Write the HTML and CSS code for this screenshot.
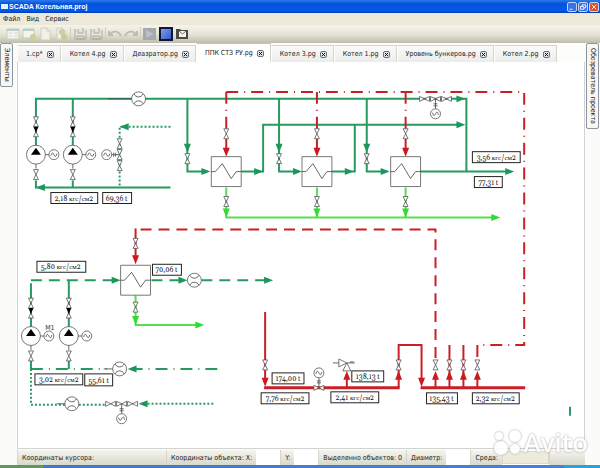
FILE: index.html
```
<!DOCTYPE html>
<html lang="ru">
<head>
    <meta charset="UTF-8">
    <meta name="viewport" content="width=device-width, initial-scale=1.0">
    <title>SCADA Котельная.proj</title>
    <link rel="stylesheet" href="styles.css">
</head>
<body>

<header class="titlebar">
    <span class="app-icon"></span>
    <h1>SCADA Котельная.proj</h1>
    <button class="win-btn" aria-label="Свернуть"><svg viewBox="0 0 9 9"><path d="M2 7h3"/></svg></button>
    <button class="win-btn" aria-label="Восстановить"><svg viewBox="0 0 9 9"><path d="M3.5 4V2h4v3.500H6M1.500 4h4v3h-4z"/></svg></button>
    <button class="win-btn close" aria-label="Закрыть"><svg viewBox="0 0 9 9"><path d="M2 2l5 5M7 2l-5 5"/></svg></button>
</header>

<nav class="menu">
    <button>Файл</button>
    <button>Вид</button>
    <button>Сервис</button>
</nav>

<div class="toolbar">
    <button aria-label="Новый проект"><svg viewBox="0 0 14 14"><path d="M1 2h12v10H1z" fill="#f4f5ee" stroke="#c9cdbf"/><path d="M1 3h12" stroke="#b5cfc9" stroke-width="2"/><path d="M3 6h3M3 9h3M8 6h4M8 9h4" stroke="#d5d8cc"/></svg></button>
    <button aria-label="Добавить окно"><svg viewBox="0 0 14 14"><path d="M1 2h11v9H1z" fill="#f4f5ee" stroke="#c9cdbf"/><path d="M1 3h11" stroke="#b5cfc9" stroke-width="2"/><circle cx="11" cy="10" r="3" fill="#c5d39b"/></svg></button>
    <button aria-label="Новая страница"><svg viewBox="0 0 14 14"><path d="M3 1h6l3 3v9H3z" fill="#f1f1e9" stroke="#cfd0c4"/><path d="M9 1v3h3" fill="none" stroke="#cfd0c4"/></svg></button>
    <button aria-label="Добавить страницу"><svg viewBox="0 0 14 14"><path d="M3 1h5l3 3v8H3z" fill="#efefe5" stroke="#cfd0c4"/><circle cx="8" cy="5" r="3" fill="#c7d1a8"/><circle cx="10" cy="10" r="3" fill="#c2ce9a"/></svg></button>
    <span class="separator"></span>
    <button aria-label="Сохранить"><svg viewBox="0 0 14 14"><path d="M2 2v10h11V3M4 9h7v3H4zM5 2v4h5V1" fill="#e4e4dc" stroke="#a9aaa2"/></svg></button>
    <button aria-label="Сохранить все"><svg viewBox="0 0 14 14"><path d="M2 2v10h11V3M4 9h7v3H4zM5 2v4h5V1" fill="#e4e4dc" stroke="#a9aaa2"/></svg></button>
    <span class="separator"></span>
    <button aria-label="Отменить"><svg viewBox="0 0 14 14"><path d="M1 4v4h4M2 7c3-3 8-4 11 2" fill="none" stroke="#bcbdb3" stroke-width="2"/></svg></button>
    <button aria-label="Повторить"><svg viewBox="0 0 14 14"><path d="M13 4v4H9M12 7C9 4 4 3 1 9" fill="none" stroke="#bcbdb3" stroke-width="2"/></svg></button>
    <span class="separator"></span>
    <button aria-label="Запуск"><svg viewBox="0 0 14 14"><path d="M0 1h13v12H0z" fill="#a5a8ae"/><path d="M3 3l8 4-8 4z" fill="#bcc0c8"/></svg></button>
    <button aria-label="Стоп"><svg viewBox="0 0 14 14"><defs><linearGradient id="stop" x2="1" y2="1"><stop stop-color="#86a6ee"/><stop offset="1" stop-color="#2b54c0"/></linearGradient></defs><path d="M1 1h12v12H1z" fill="url(#stop)" stroke="#0e1538" stroke-width="2"/></svg></button>
    <button aria-label="Снимок"><svg viewBox="0 0 14 14"><path d="M1 2h4l1 1h7v9H1z" fill="#4a4c44"/><path d="M4 4h7v6H4z" fill="#f5f5ef"/><path d="M4 4l3.500 3L11 4" fill="none" stroke="#6b6d65"/></svg></button>
</div>

<div class="workspace">
    <aside class="side left"><button>Элементы</button></aside>

    <main class="editor">
        <div class="tabs" role="tablist">
            <div class="tab"><button role="tab">1.ср*</button><button class="tab-close" aria-label="Закрыть вкладку"><svg viewBox="0 0 5 5"><path d="M1 1l3 3M4 1L1 4"/></svg></button></div>
            <div class="tab"><button role="tab">Котел 4.pg</button><button class="tab-close" aria-label="Закрыть вкладку"><svg viewBox="0 0 5 5"><path d="M1 1l3 3M4 1L1 4"/></svg></button></div>
            <div class="tab"><button role="tab">Деазратор.pg</button><button class="tab-close" aria-label="Закрыть вкладку"><svg viewBox="0 0 5 5"><path d="M1 1l3 3M4 1L1 4"/></svg></button></div>
            <div class="tab active"><button role="tab" aria-selected="true">ППК СТЗ РУ.pg</button><button class="tab-close" aria-label="Закрыть вкладку"><svg viewBox="0 0 5 5"><path d="M1 1l3 3M4 1L1 4"/></svg></button></div>
            <div class="tab"><button role="tab">Котел 3.pg</button><button class="tab-close" aria-label="Закрыть вкладку"><svg viewBox="0 0 5 5"><path d="M1 1l3 3M4 1L1 4"/></svg></button></div>
            <div class="tab"><button role="tab">Котел 1.pg</button><button class="tab-close" aria-label="Закрыть вкладку"><svg viewBox="0 0 5 5"><path d="M1 1l3 3M4 1L1 4"/></svg></button></div>
            <div class="tab"><button role="tab">Уровень бункеров.pg</button><button class="tab-close" aria-label="Закрыть вкладку"><svg viewBox="0 0 5 5"><path d="M1 1l3 3M4 1L1 4"/></svg></button></div>
            <div class="tab"><button role="tab">Котел 2.pg</button><button class="tab-close" aria-label="Закрыть вкладку"><svg viewBox="0 0 5 5"><path d="M1 1l3 3M4 1L1 4"/></svg></button></div>
        </div>

        <svg class="scheme" viewBox="17 62 568 387" preserveAspectRatio="xMinYMin meet">
            <defs>
                <path id="arrow" d="M0 0L-9-3.500V3.500z"/>
                <path id="valve" class="part" d="M-2.500-5h5L-2.500 5h5z"/>
                <g id="check">
                    <path class="part" d="M-2.500 5h5L0 0z"/>
                    <path class="solid" d="M-2.500-5h5L0 1z"/>
                </g>
                <g id="motor">
                    <circle class="part" r="5"/>
                    <path class="wire" d="M-3 1C-2-3-1-2 0 0S2 3 3-1"/>
                </g>
                <g id="meter">
                    <circle class="part" r="7"/>
                    <path class="wire" d="M-4.500-5C-3-1 3-1 4.500-5M-4.500 5C-3 1 3 1 4.500 5"/>
                </g>
                <g id="pump">
                    <path class="wire" d="M9 0h5M0 9v5"/>
                    <circle class="part" r="9.500"/>
                    <path class="solid" d="M-5 0h10L0-7z"/>
                    <use href="#motor" x="18"/>
                    <use href="#valve" y="20"/>
                    <use href="#valve" y="-33"/>
                    <use href="#check" y="-23"/>
                </g>
                <g id="boiler">
                    <path class="part" d="M-15-15h30v30h-30z"/>
                    <path class="wire" d="M-15 0h4l7-8 9 15 5-7h5"/>
                </g>
                <g id="control">
                    <path class="wire" d="M0 0v-10M-2-5h4M-2-7h4"/>
                    <use href="#motor" y="-15"/>
                    <use href="#valve" transform="rotate(90)"/>
                </g>
            </defs>

            <!-- feed water, upper part -->
            <g class="pipe green">
                <path d="M35 146V99h432v73M72 99v47M35 181v7h135M72 181v7"/>
                <path d="M187 99v73h20M279 99v73h20M367 99v73h20"/>
                <path d="M241 172h22v-47h200M332 172h23v-47M420 172h87"/>
                <path class="dotted" d="M170 127h-51v61"/>
            </g>
            <path class="wire" d="M107 99h24"/>
            <g class="green-fill">
                <use href="#arrow" transform="translate(35 188) rotate(180)"/>
                <use href="#arrow" transform="translate(119 127) rotate(180)"/>
                <use href="#arrow" transform="translate(187 153) rotate(90)"/>
                <use href="#arrow" transform="translate(279 153) rotate(90)"/>
                <use href="#arrow" transform="translate(367 153) rotate(90)"/>
                <use href="#arrow" x="210" y="172"/>
                <use href="#arrow" x="263" y="172"/>
                <use href="#arrow" x="302" y="172"/>
                <use href="#arrow" x="354" y="172"/>
                <use href="#arrow" x="390" y="172"/>
                <use href="#arrow" x="466" y="99"/>
                <use href="#arrow" x="466" y="125"/>
                <use href="#arrow" x="515" y="172"/>
            </g>

            <!-- drains -->
            <g class="pipe lime">
                <path d="M226 188v30h270M317 188v29M406 188v29"/>
                <path d="M135 296v30h62"/>
            </g>
            <g class="lime-fill">
                <use href="#arrow" transform="translate(226 218) rotate(90)"/>
                <use href="#arrow" transform="translate(317 218) rotate(90)"/>
                <use href="#arrow" transform="translate(406 218) rotate(90)"/>
                <use href="#arrow" x="501" y="218"/>
                <use href="#arrow" transform="translate(135 326) rotate(90)"/>
                <use href="#arrow" x="204" y="326"/>
            </g>

            <!-- steam to boilers -->
            <g class="pipe red">
                <path class="dashdot" d="M226 92h299v254h-47v20"/>
                <path class="dashdot" d="M226 92v38"/>
                <path class="dashdot" d="M317 92v38"/>
                <path class="dashdot" d="M406 92v38"/>
                <path d="M226 139v12M317 139v12M406 139v12"/>
                <path class="dashed" d="M140 230h296v132"/>
                <path d="M135 229v30"/>
            </g>
            <g class="red-fill">
                <use href="#arrow" transform="translate(226 157) rotate(90)"/>
                <use href="#arrow" transform="translate(317 157) rotate(90)"/>
                <use href="#arrow" transform="translate(406 157) rotate(90)"/>
                <use href="#arrow" transform="translate(135 265) rotate(90)"/>
            </g>

            <use href="#pump" x="35" y="155"/>
            <use href="#pump" x="72" y="155"/>
            <use href="#meter" x="138" y="99"/>
            <path class="wire" d="M111 155h8M113 153v4M115 153v4"/>
            <use href="#motor" x="106" y="155"/>
            <use href="#valve" x="119" y="144"/>
            <use href="#valve" x="119" y="155"/>
            <use href="#valve" x="119" y="166"/>
            <use href="#valve" x="187" y="159"/>
            <use href="#valve" x="279" y="159"/>
            <use href="#valve" x="367" y="159"/>
            <use href="#valve" x="226" y="134"/>
            <use href="#valve" x="317" y="134"/>
            <use href="#valve" x="406" y="134"/>
            <use href="#valve" x="226" y="202"/>
            <use href="#valve" x="317" y="202"/>
            <use href="#valve" x="406" y="202"/>
            <use href="#boiler" x="226" y="172"/>
            <use href="#boiler" x="317" y="172"/>
            <use href="#boiler" x="406" y="172"/>
            <use href="#control" transform="translate(436 99) scale(1 -1)"/>
            <use href="#valve" transform="translate(425 99) rotate(90)"/>
            <use href="#valve" transform="translate(447 99) rotate(90)"/>

            <!-- lower pumps and heater -->
            <g class="pipe green">
                <path d="M30 284v44M68 281v47M30 362v8M68 362v8"/>
                <path class="dashed" d="M30 281h84"/>
                <path class="dashed" d="M151 281h30M201 281h65"/>
                <path class="dashdot" d="M217 370h-90"/>
                <path class="dashdot" d="M30 370h76"/>
                <path class="dotted" d="M30 370v36h75M213 405h-67"/>
                <path d="M571 408v9"/>
            </g>
            <path class="wire" d="M103 370h10M56 405h9"/>
            <g class="green-fill">
                <use href="#arrow" x="120" y="281"/>
                <use href="#arrow" x="187" y="281"/>
                <use href="#arrow" x="273" y="281"/>
                <use href="#arrow" transform="translate(127 370) rotate(180)"/>
                <use href="#arrow" transform="translate(138 405) rotate(180)"/>
            </g>
            <use href="#pump" x="30" y="337"/>
            <use href="#pump" x="68" y="337"/>
            <use href="#boiler" x="135" y="281"/>
            <use href="#valve" x="135" y="244"/>
            <use href="#valve" x="135" y="308"/>
            <use href="#meter" x="194" y="281"/>
            <use href="#meter" x="119" y="370"/>
            <use href="#meter" x="71" y="405"/>
            <use href="#control" transform="translate(121 405) scale(1 -1)"/>
            <use href="#valve" transform="translate(110 405) rotate(90)"/>
            <use href="#valve" transform="translate(132 405) rotate(90)"/>

            <!-- steam header -->
            <g class="pipe red">
                <path d="M265 313v69M347 389v-9M399 389v-43h23v38M436 389v-9M450 389v-43M464 389v-43M478 389v-9"/>
                <path class="header" d="M264 389h136M421 389h105"/>
            </g>
            <g class="red-fill">
                <use href="#arrow" transform="translate(265 388) rotate(90)"/>
                <use href="#arrow" transform="translate(422 388) rotate(90)"/>
                <use href="#arrow" transform="translate(347 372) rotate(-90)"/>
                <use href="#arrow" transform="translate(399 372) rotate(-90)"/>
                <use href="#arrow" transform="translate(436 372) rotate(-90)"/>
                <use href="#arrow" transform="translate(450 372) rotate(-90)"/>
                <use href="#arrow" transform="translate(464 372) rotate(-90)"/>
                <use href="#arrow" transform="translate(478 372) rotate(-90)"/>
            </g>
            <use href="#valve" x="265" y="366"/>
            <use href="#valve" x="399" y="366"/>
            <use href="#valve" x="436" y="366"/>
            <use href="#valve" x="450" y="366"/>
            <use href="#valve" x="464" y="366"/>
            <use href="#valve" x="478" y="366"/>
            <use href="#control" x="319" y="389"/>
            <path class="wire" d="M333 364h6M347 364h8M350 363h4"/>
            <path class="part" d="M339 360l8 4-8 4zM347 364l4 8h-8z"/>

            <!-- readings -->
            <g class="reading">
                <rect x="50" y="193" width="47" height="11"/><text x="73" y="201">2,18 кгс/см2</text>
                <rect x="102" y="193" width="29" height="11"/><text x="116" y="201">69,36 t</text>
                <rect x="473" y="152" width="48" height="11"/><text x="497" y="160">3,56 кгс/см2</text>
                <rect x="475" y="177" width="28" height="11"/><text x="489" y="185">77,31 t</text>
                <rect x="36" y="262" width="49" height="11"/><text x="60" y="270">5,80 кгс/см2</text>
                <rect x="152" y="265" width="29" height="11"/><text x="166" y="273">70,06 t</text>
                <rect x="34" y="375" width="48" height="11"/><text x="58" y="383">3,02 кгс/см2</text>
                <rect x="84" y="375" width="28" height="12"/><text x="98" y="384">55,61 t</text>
                <rect x="272" y="374" width="32" height="11"/><text x="288" y="382">174,00 t</text>
                <rect x="261" y="394" width="48" height="11"/><text x="285" y="402">7,76 кгс/см2</text>
                <rect x="352" y="372" width="32" height="11"/><text x="368" y="380">138,13 t</text>
                <rect x="331" y="393" width="48" height="11"/><text x="355" y="401">2,41 кгс/см2</text>
                <rect x="427" y="394" width="31" height="11"/><text x="442" y="402">135,43 t</text>
                <rect x="473" y="394" width="47" height="11"/><text x="496" y="402">2,32 кгс/см2</text>
            </g>
            <text class="tag" x="49" y="331">М1</text>
        </svg>

        <footer class="status">
            <span class="cell cursor">Координаты курсора:</span>
            <label class="cell" for="obj-x">Координаты объекта: X:</label><input id="obj-x" type="text">
            <label class="cell" for="obj-y">Y:</label><input id="obj-y" type="text">
            <span class="cell">Выделенно объектов: 0</span>
            <label class="cell" for="diameter">Диаметр:</label><input id="diameter" type="text">
            <label class="cell" for="medium">Среда:</label><select id="medium"><option></option></select>
            <span class="cell rest"></span>
        </footer>
    </main>

    <aside class="side right"><button>Обозреватель проекта</button></aside>
</div>

<div class="taskbar"></div>

<div class="watermark">
    <svg viewBox="0 0 30 28"><circle cx="6" cy="8" r="4"/><circle cx="22" cy="8" r="6"/><circle cx="8" cy="20" r="7"/><circle cx="22" cy="21" r="5"/></svg>
    <span>Avito</span>
</div>

</body>
</html>
```
FILE: styles.css
```
* {
    box-sizing: border-box;
}
body {
    margin: 0;
    min-height: 100vh;
    display: flex;
    flex-direction: column;
    position: relative;
    background: #fbfbf9;
    font-family: "DejaVu Sans Condensed", "DejaVu Sans", sans-serif;
    font-size: 7px;
    line-height: 10px;
    color: #222;
}
button, input, select {
    font: inherit;
    color: inherit;
    margin: 0;
    padding: 0;
    border: none;
    background: none;
}
svg {
    display: block;
}
.titlebar {
    display: flex;
    align-items: center;
    gap: 1px;
    height: 13px;
    padding: 0 1px;
    background: linear-gradient(#2c7bea, #0552dc 30%, #0459ea 80%, #0340b4);
}
.titlebar h1 {
    flex: 1;
    margin: 0;
    font-size: 7px;
    font-weight: bold;
    font-family: "Liberation Sans", Arial, sans-serif;
    color: #fff;
}
.app-icon {
    width: 7px;
    height: 5px;
    background: #e8f1ff;
}
.win-btn {
    width: 10px;
    height: 10px;
    border: 1px solid #c3d5f8;
    border-radius: 2px;
    background: #3a74e4;
}
.win-btn.close {
    background: #d9532e;
}
.win-btn path {
    fill: none;
    stroke: #fff;
}
.menu {
    display: flex;
    gap: 6px;
    height: 12px;
    padding: 1px 3px;
    background: #ece9d8;
}
.toolbar {
    display: flex;
    align-items: center;
    gap: 2px;
    height: 18px;
    padding: 0 6px;
    background: linear-gradient(#f5f4ea, #e6e4d6 50%, #c0beaa);
}
.toolbar button {
    width: 14px;
    height: 14px;
}
.separator {
    width: 1px;
    height: 14px;
    background: #d0cebf;
}
.workspace {
    flex: 1;
    display: flex;
}
.side {
    display: flex;
    align-items: flex-start;
}
.side button {
    writing-mode: vertical-rl;
    width: 13px;
    padding: 4px 0;
    border: 1px solid #8d96a0;
    border-radius: 2px;
    background: #f7f7f5;
}
.left {
    width: 17px;
}
.right {
    width: 15px;
    justify-content: center;
}
.editor {
    flex: 1;
    min-width: 0;
    display: flex;
    flex-direction: column;
}
.tabs {
    display: flex;
    align-items: flex-end;
    height: 19px;
    background: #fdfdfc;
}
.tab {
    display: flex;
    align-items: center;
    gap: 4px;
    height: 17px;
    padding: 0 6px 0 8px;
    border: 1px solid #d3d3d0;
    border-left-color: #fff;
    border-bottom: none;
    background: linear-gradient(#fafafa, #ececea);
    white-space: nowrap;
}
.tab.active {
    height: 19px;
    border-top: 1px solid #e5c36a;
    background: #fff;
}
.tab-close {
    width: 7px;
    height: 7px;
    border: 1px solid #66727c;
    border-radius: 2px;
    background: #dfe5e9;
}
.tab-close path {
    fill: none;
    stroke: #111;
}
.scheme {
    width: 100%;
    border: 1px solid #d2d2d0;
    border-top: none;
    background: #fff;
}
.pipe {
    fill: none;
    stroke-width: 2;
}
.green {
    stroke: #279a60;
}
.lime {
    stroke: #55df4d;
}
.red {
    stroke: #c91f26;
}
.green-fill {
    fill: #1d965a;
}
.lime-fill {
    fill: #2fdc31;
}
.red-fill {
    fill: #cc181f;
}
.header {
    stroke-width: 3;
}
.dotted {
    stroke-dasharray: 2 2;
}
.dashed {
    stroke-dasharray: 11 7;
}
.dashdot {
    stroke-dasharray: 12 6 1 6;
}
.part {
    fill: #fff;
    stroke: #555;
    stroke-width: 0.8;
}
.wire {
    fill: none;
    stroke: #444;
    stroke-width: 0.8;
}
.solid {
    fill: #000;
}
.reading rect {
    fill: #fff;
    stroke: #222;
}
.reading text {
    font-family: Gelasio, Georgia, "Liberation Serif", serif;
    font-size: 7px;
    text-anchor: middle;
    fill: #111;
}
.tag {
    font-size: 7px;
    text-anchor: middle;
    fill: #333;
}
.status {
    display: flex;
    align-items: stretch;
    height: 15px;
    margin-top: auto;
    background: #fff;
}
.cell {
    padding: 3px 4px;
    border-left: 1px solid #d5d4ca;
    background: linear-gradient(#f5f5f0, #d9d8cc);
    white-space: nowrap;
}
.cursor {
    flex: 1;
}
.rest {
    width: 36px;
}
.status input {
    width: 24px;
    background: #fff;
}
.status select {
    width: 47px;
    margin: 1px 0;
    border: 1px solid #dddacb;
    background: #eeebdd;
    appearance: none;
}
.taskbar {
    height: 3px;
    background: linear-gradient(90deg, #5c9a55 43px, #3f78cc 43px, #4482d8 94%, #2aa0dc 94%);
}
.watermark {
    position: absolute;
    right: 12px;
    bottom: 12px;
    display: flex;
    align-items: center;
    gap: 1px;
    font-family: "Open Sans", sans-serif;
    font-size: 26px;
    font-weight: 600;
    line-height: 28px;
    color: #fff;
    opacity: 0.9;
    filter: drop-shadow(0 0 1px #999);
    pointer-events: none;
}
.watermark svg {
    width: 30px;
    fill: #fff;
}
```
